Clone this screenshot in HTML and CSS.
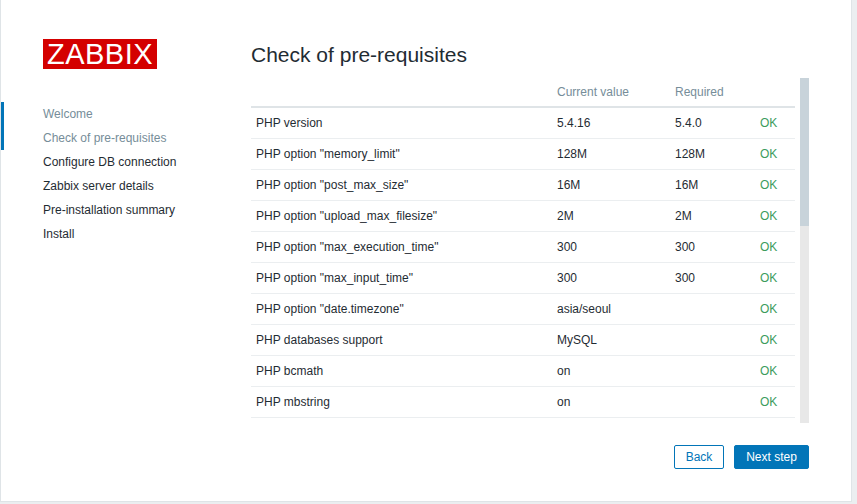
FILE: index.html
```html
<!DOCTYPE html>
<html lang="en">
<head>
    <meta charset="UTF-8">
    <meta name="viewport" content="width=device-width, initial-scale=1.0">
    <title>Zabbix installation</title>
    <link rel="stylesheet" href="styles.css">
</head>
<body>
    <div class="setup-container">
        <div class="setup-left">
            <div class="logo">ZABBIX</div>
            <ul class="steps">
                <li class="done">Welcome</li>
                <li class="done current">Check of pre-requisites</li>
                <li>Configure DB connection</li>
                <li>Zabbix server details</li>
                <li>Pre-installation summary</li>
                <li>Install</li>
            </ul>
        </div>
        <div class="setup-right">
            <h1>Check of pre-requisites</h1>
            <div class="table-wrap">
                <table>
                    <thead>
                        <tr><th class="col-name"></th><th class="col-current">Current value</th><th class="col-required">Required</th><th class="col-status"></th></tr>
                    </thead>
                    <tbody>
                        <tr><td>PHP version</td><td>5.4.16</td><td>5.4.0</td><td class="ok">OK</td></tr>
                        <tr><td>PHP option "memory_limit"</td><td>128M</td><td>128M</td><td class="ok">OK</td></tr>
                        <tr><td>PHP option "post_max_size"</td><td>16M</td><td>16M</td><td class="ok">OK</td></tr>
                        <tr><td>PHP option "upload_max_filesize"</td><td>2M</td><td>2M</td><td class="ok">OK</td></tr>
                        <tr><td>PHP option "max_execution_time"</td><td>300</td><td>300</td><td class="ok">OK</td></tr>
                        <tr><td>PHP option "max_input_time"</td><td>300</td><td>300</td><td class="ok">OK</td></tr>
                        <tr><td>PHP option "date.timezone"</td><td>asia/seoul</td><td></td><td class="ok">OK</td></tr>
                        <tr><td>PHP databases support</td><td>MySQL</td><td></td><td class="ok">OK</td></tr>
                        <tr><td>PHP bcmath</td><td>on</td><td></td><td class="ok">OK</td></tr>
                        <tr><td>PHP mbstring</td><td>on</td><td></td><td class="ok">OK</td></tr>
                    </tbody>
                </table>
                <div class="scrollbar"><div class="scrollbar-thumb"></div></div>
            </div>
            <div class="setup-footer">
                <button class="btn-alt">Back</button>
                <button class="btn-main">Next step</button>
            </div>
        </div>
    </div>
</body>
</html>
```

FILE: styles.css
```css
html, body {
    height: 100%;
}

body {
    margin: 0;
    background: #ebeef0;
    color: #1f2c33;
    font-family: "Liberation Sans", Arial, sans-serif;
    font-size: 12px;
    overflow: hidden;
}

.setup-container {
    display: flex;
    box-sizing: border-box;
    width: 852px;
    height: 502px;
    background: #fff;
    border-left: 1px solid #dfe4e7;
    border-right: 1px solid #dfe4e7;
    border-bottom: 1px solid #dfe4e7;
}

/* left column with logo and step list */
.setup-left {
    flex: none;
    width: 250px;
    padding-top: 39px;
}

.logo {
    width: 114px;
    height: 30px;
    margin-left: 42px;
    background: #d40000;
    color: #fff;
    font-size: 29px;
    line-height: 31px;
    text-align: center;
    letter-spacing: 0.5px;
}

.steps {
    list-style: none;
    margin: 33px 0 0;
    padding: 0;
}

.steps li {
    height: 24px;
    line-height: 24px;
    padding-left: 42px;
}

.steps .done {
    color: #768d99;
    border-left: 3px solid #0275b8;
    padding-left: 39px;
}

/* right column */
.setup-right {
    flex: none;
    width: 558px;
    display: flex;
    flex-direction: column;
}

h1 {
    margin: 0;
    height: 78px;
    padding-top: 43px;
    box-sizing: border-box;
    font-size: 21px;
    line-height: 24px;
    font-weight: normal;
}

.table-wrap {
    display: flex;
    align-items: flex-start;
    gap: 5px;
    height: 345px;
}

/* the table scrolls in the real page, here the bar is drawn */
.scrollbar {
    flex: none;
    width: 9px;
    height: 100%;
    background: #e8e8e8;
}

.scrollbar-thumb {
    height: 148px;
    background: #c8d3da;
}

table {
    flex: none;
    width: 544px;
    border-collapse: collapse;
    table-layout: fixed;
}

th {
    height: 28px;
    padding: 0 5px;
    color: #768d99;
    font-weight: normal;
    text-align: left;
    border-bottom: 2px solid #dfe4e7;
}

td {
    height: 30px;
    padding: 0 5px;
    border-bottom: 1px solid #ebeef0;
}

.col-name { width: 291px; }
.col-current { width: 108px; }
.col-required { width: 75px; }

.ok {
    color: #3c9c5c;
}

.setup-footer {
    display: flex;
    justify-content: flex-end;
    gap: 10px;
    padding-top: 22px;
}

button {
    height: 24px;
    padding: 0;
    border-radius: 2px;
    font-family: inherit;
    font-size: 12px;
    cursor: pointer;
}

.btn-alt {
    width: 50px;
    background: #fff;
    color: #0275b8;
    border: 1px solid #0275b8;
}

.btn-main {
    width: 75px;
    background: #0275b8;
    color: #fff;
    border: 1px solid #0275b8;
}
```
